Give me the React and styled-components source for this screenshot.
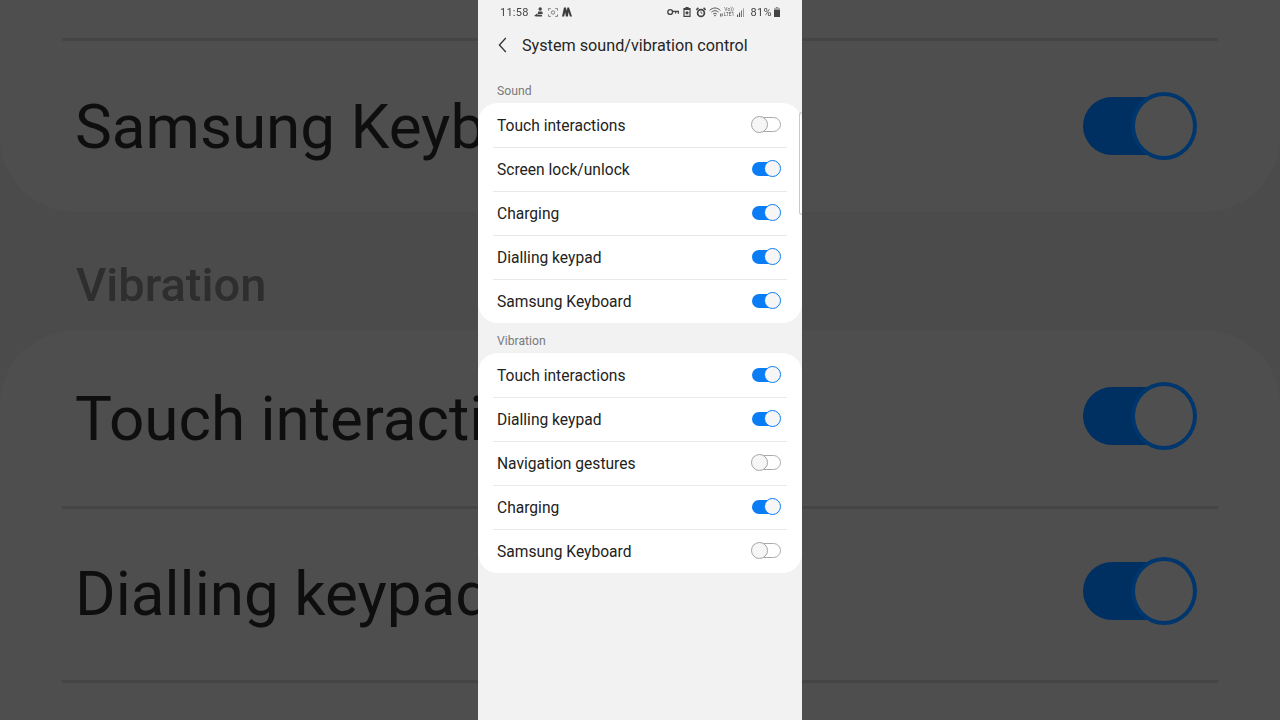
import React from 'react';
import styled, { createGlobalStyle } from 'styled-components';

const soundRows = [
	{ label: 'Touch interactions', on: false },
	{ label: 'Screen lock/unlock', on: true },
	{ label: 'Charging', on: true },
	{ label: 'Dialling keypad', on: true },
	{ label: 'Samsung Keyboard', on: true },
];

const vibrationRows = [
	{ label: 'Touch interactions', on: true },
	{ label: 'Dialling keypad', on: true },
	{ label: 'Navigation gestures', on: false },
	{ label: 'Charging', on: true },
	{ label: 'Samsung Keyboard', on: false },
];

const Switch = ({ on }) => (
	<SwitchBody>
		<Track $on={on} />
		<Knob $on={on} />
	</SwitchBody>
);

const BigSwitch = ({ lift = 0 }) => (
	<BigSwitchBody $lift={lift}>
		<BigTrack />
		<BigKnob />
	</BigSwitchBody>
);

const PeopleIcon = () => (
	<svg width="9" height="10" viewBox="0 0 9 10" fill="#444">
		<circle cx="6.2" cy="2" r="1.7" />
		<path d="M3.6 7.4 L4.2 4.4 L8.2 4.4 L8.8 7 Z" />
		<path d="M0 9 L3 6.4 L3.6 8 L8 8 L8 9.6 L2.4 9.6 Z" />
	</svg>
);

const ScanIcon = () => (
	<svg width="10" height="9" viewBox="0 0 10 9" fill="none" stroke="#666" strokeWidth="0.8">
		<path d="M0.5 2.6 V0.6 H2.8 M7.2 0.6 H9.5 V2.6 M9.5 6.4 V8.4 H7.2 M2.8 8.4 H0.5 V6.4" />
		<circle cx="5" cy="4.5" r="1.7" />
	</svg>
);

const MountainIcon = () => (
	<svg width="10" height="10" viewBox="0 0 10 10" fill="#3a3a3a">
		<path d="M0 9.6 L2 0.6 L3.9 0.6 L4.8 4 L5.4 0.6 L7 0.6 L10 9.6 L7.9 9.6 L6.6 5 L5.9 9.6 L3.9 9.6 L3.1 5 L2.2 9.6 Z" />
	</svg>
);

const KeyIcon = () => (
	<svg width="12" height="8" viewBox="0 0 12 8" fill="none" stroke="#444" strokeWidth="1.4">
		<circle cx="3.2" cy="4" r="2.4" />
		<path d="M5.6 3.4 H11.4 V5.8 M8.6 3.4 V5.4" />
	</svg>
);

const SaverIcon = () => (
	<svg width="8" height="10" viewBox="0 0 8 10" fill="#444">
		<path d="M2.4 0 H5.6 V1 H7.6 V10 H0.4 V1 H2.4 Z M1.6 3 V8.8 H6.4 V3 Z" fillRule="evenodd" />
		<circle cx="4" cy="5.8" r="1.6" />
	</svg>
);

const AlarmIcon = () => (
	<svg width="10" height="11" viewBox="0 0 10 11" fill="none" stroke="#444">
		<circle cx="5" cy="6" r="3.4" strokeWidth="1.7" />
		<path d="M0.4 3 L2.4 0.8 M9.6 3 L7.6 0.8" strokeWidth="1.6" />
		<path d="M5 4.4 V6.2 H6.4" strokeWidth="0.8" />
	</svg>
);

const WifiIcon = () => (
	<svg width="14" height="10" viewBox="0 0 14 10" fill="none" stroke="#555" strokeWidth="1">
		<path d="M0.6 3.4 C3.8 0.2 8.2 0.2 11.4 3.4" />
		<path d="M2.4 5.2 C4.6 3.2 7.4 3.2 9.6 5.2" />
		<path d="M4.2 7 C5.4 6 6.6 6 7.8 7" />
		<circle cx="6" cy="8.6" r="0.8" fill="#555" stroke="none" />
		<path d="M11.6 9.6 V6.6 M13.2 6.4 V9.4" strokeWidth="0.9" />
	</svg>
);

const SignalIcon = () => (
	<svg width="7" height="9" viewBox="0 0 7 9" fill="#555">
		<rect x="0" y="6.6" width="1.1" height="2.4" />
		<rect x="2" y="4.6" width="1.1" height="4.4" />
		<rect x="4" y="2.4" width="1" height="6.6" fill="#777" />
		<rect x="6" y="0.4" width="1" height="8.6" fill="#999" />
	</svg>
);

const BatteryIcon = () => (
	<svg width="6" height="10" viewBox="0 0 6 10" fill="#444">
		<rect x="1.8" y="0" width="2.4" height="1.2" fill="#888" />
		<rect x="0" y="1.2" width="6" height="1.8" fill="#999" />
		<rect x="0" y="3" width="6" height="7" />
	</svg>
);

const BackIcon = () => (
	<svg width="9" height="16" viewBox="0 0 9 16" fill="none" stroke="#333" strokeWidth="1.3">
		<path d="M7.8 1 L1.4 8 L7.8 15" />
	</svg>
);

const App = () => {
	return (
		<>
			<GlobalStyle />
			<Page>
				<Backdrop>
					<BackCard>
						<BackCardTop />
						<BackRow $height={171}>
							<BackLabel>Samsung Keyboard</BackLabel>
							<BigSwitch lift={2} />
						</BackRow>
					</BackCard>
					<BackSection>Vibration</BackSection>
					<BackCard $round>
						<BackRow $height={176}>
							<BackLabel>Touch interactions</BackLabel>
							<BigSwitch lift={4} />
						</BackRow>
						<BackRow $height={174} $line>
							<BackLabel>Dialling keypad</BackLabel>
							<BigSwitch lift={4} />
						</BackRow>
						<BackRow $height={40} $line />
					</BackCard>
				</Backdrop>
				<Phone>
					<StatusBar>
						<StatusGroup>
							<Clock>11:58</Clock>
							<Slot $gap={5}><PeopleIcon /></Slot>
							<Slot $gap={5}><ScanIcon /></Slot>
							<Slot $gap={4}><MountainIcon /></Slot>
						</StatusGroup>
						<StatusGroup>
							<KeyIcon />
							<Slot $gap={4}><SaverIcon /></Slot>
							<Slot $gap={5}><AlarmIcon /></Slot>
							<Slot $gap={3}><WifiIcon /></Slot>
							<Volte $gap={1}>
								<span>Vo))</span>
								<span>LTE1</span>
							</Volte>
							<Slot $gap={3}><SignalIcon /></Slot>
							<Percent>81%</Percent>
							<Slot $gap={2}><BatteryIcon /></Slot>
						</StatusGroup>
					</StatusBar>
					<Header>
						<BackIcon />
						<Title>System sound/vibration control</Title>
					</Header>
					<SectionLabel>Sound</SectionLabel>
					<Card>
						{soundRows.map((row) => (
							<Row key={row.label}>
								<RowLabel>{row.label}</RowLabel>
								<Switch on={row.on} />
							</Row>
						))}
					</Card>
					<SectionLabel $tight>Vibration</SectionLabel>
					<Card>
						{vibrationRows.map((row) => (
							<Row key={row.label}>
								<RowLabel>{row.label}</RowLabel>
								<Switch on={row.on} />
							</Row>
						))}
					</Card>
					<ScrollThumb />
				</Phone>
			</Page>
		</>
	);
};

export default App;

const GlobalStyle = createGlobalStyle`
	html, body {
		margin: 0;
		padding: 0;
		background: #4a4a4a;
	}
	* {
		box-sizing: border-box;
	}
`;

const Page = styled.div`
	position: relative;
	width: 1280px;
	height: 720px;
	overflow: hidden;
	display: flex;
	justify-content: center;
	background: #4b4b4b;
	font-family: Roboto, 'Liberation Sans', sans-serif;
`;

/* the same screen, enlarged and dimmed, lying behind the phone */
const Backdrop = styled.div`
	position: absolute;
	inset: 0;
	display: flex;
	flex-direction: column;
	filter: blur(0.7px);
`;

const BackCard = styled.div`
	background: #4e4e4e;
	border-radius: ${(p) => (p.$round ? '75px 75px 0 0' : '0 0 75px 75px')};
`;

const BackCardTop = styled.div`
	height: 41px;
	margin: 0 62px;
	border-bottom: 3px solid #454545;
`;

const BackRow = styled.div`
	height: ${(p) => p.$height}px;
	margin: 0 62px;
	padding: 0 21px 0 13px;
	display: flex;
	align-items: center;
	justify-content: space-between;
	box-shadow: ${(p) => (p.$line ? 'inset 0 3px 0 #454545' : 'none')};
`;

/* cut where the phone starts, the rest of the label is hidden behind it */
const BackLabel = styled.span`
	width: 403px;
	overflow: hidden;
	font-size: 62px;
	color: #0e0e0e;
	white-space: nowrap;
`;

const BackSection = styled.div`
	height: 118px;
	padding: 47px 0 0 76px;
	font-size: 47px;
	line-height: 52px;
	font-weight: 500;
	color: #2e2e2e;
`;

const BigSwitchBody = styled.div`
	position: relative;
	width: 114px;
	height: 68px;
	margin-bottom: ${(p) => p.$lift}px;
	display: flex;
	align-items: center;
`;

const BigTrack = styled.div`
	width: 100px;
	height: 58px;
	border-radius: 29px;
	background: #002f62;
`;

const BigKnob = styled.div`
	position: absolute;
	top: 0;
	right: 0;
	width: 66px;
	height: 68px;
	border-radius: 50%;
	border: 4px solid #00366e;
	background: #4f4f4f;
`;

const Phone = styled.div`
	position: relative;
	width: 324px;
	height: 720px;
	background: #f2f2f2;
	display: flex;
	flex-direction: column;
`;

const StatusBar = styled.div`
	height: 24px;
	padding: 0 22px;
	display: flex;
	align-items: center;
	justify-content: space-between;
	filter: blur(0.3px);
`;

const StatusGroup = styled.div`
	display: flex;
	align-items: center;
`;

const Slot = styled.span`
	display: flex;
	margin-left: ${(p) => p.$gap}px;
`;

const Clock = styled.span`
	font-size: 11px;
	color: #444444;
	letter-spacing: 0.25px;
`;

const Volte = styled.div`
	display: flex;
	flex-direction: column;
	align-items: center;
	margin-left: ${(p) => p.$gap}px;
	font-size: 5px;
	line-height: 5px;
	color: #555555;
`;

const Percent = styled.span`
	font-size: 11px;
	color: #444444;
	margin-left: 6px;
	letter-spacing: 0.4px;
`;

const Header = styled.div`
	height: 42px;
	padding-left: 20px;
	display: flex;
	align-items: center;
	gap: 15px;
`;

const Title = styled.h1`
	margin: 0;
	font-size: 16.2px;
	font-weight: 400;
	color: #252525;
`;

const SectionLabel = styled.div`
	height: ${(p) => (p.$tight ? '30px' : '37px')};
	padding-left: 19px;
	padding-bottom: 5px;
	display: flex;
	align-items: flex-end;
	font-size: 12.2px;
	color: #7a7a7a;
`;

const Card = styled.div`
	background: #ffffff;
	border-radius: 20px;
	padding: 0 15px;
`;

const Row = styled.div`
	height: 44px;
	padding: 0 6px 0 4px;
	display: flex;
	align-items: center;
	justify-content: space-between;
	box-shadow: inset 0 1px 0 #e9e9e9;
	&:first-child {
		box-shadow: none;
	}
`;

const RowLabel = styled.span`
	padding-top: 2px;
	font-size: 15.6px;
	color: #222222;
`;

const SwitchBody = styled.div`
	position: relative;
	width: 30px;
	height: 17px;
	margin-bottom: 1px;
	display: flex;
	align-items: center;
	justify-content: flex-end;
`;

const Track = styled.div`
	width: ${(p) => (p.$on ? '28px' : '27px')};
	height: ${(p) => (p.$on ? '14px' : '15px')};
	margin-right: ${(p) => (p.$on ? '1px' : '0')};
	border-radius: 8px;
	background: ${(p) => (p.$on ? '#0a7df5' : '#ffffff')};
	border: ${(p) => (p.$on ? 'none' : '1px solid #ababab')};
`;

const Knob = styled.div`
	position: absolute;
	top: 0;
	left: ${(p) => (p.$on ? '13px' : '0')};
	width: 17px;
	height: 17px;
	border-radius: 50%;
	background: #f6f6f6;
	border: 1px solid ${(p) => (p.$on ? '#0a7df5' : '#a5a5a5')};
`;

const ScrollThumb = styled.div`
	position: absolute;
	top: 112px;
	right: 0;
	width: 3px;
	height: 103px;
	border: 1px solid #c9c9c9;
	border-right: none;
	border-radius: 3px 0 0 3px;
`;
